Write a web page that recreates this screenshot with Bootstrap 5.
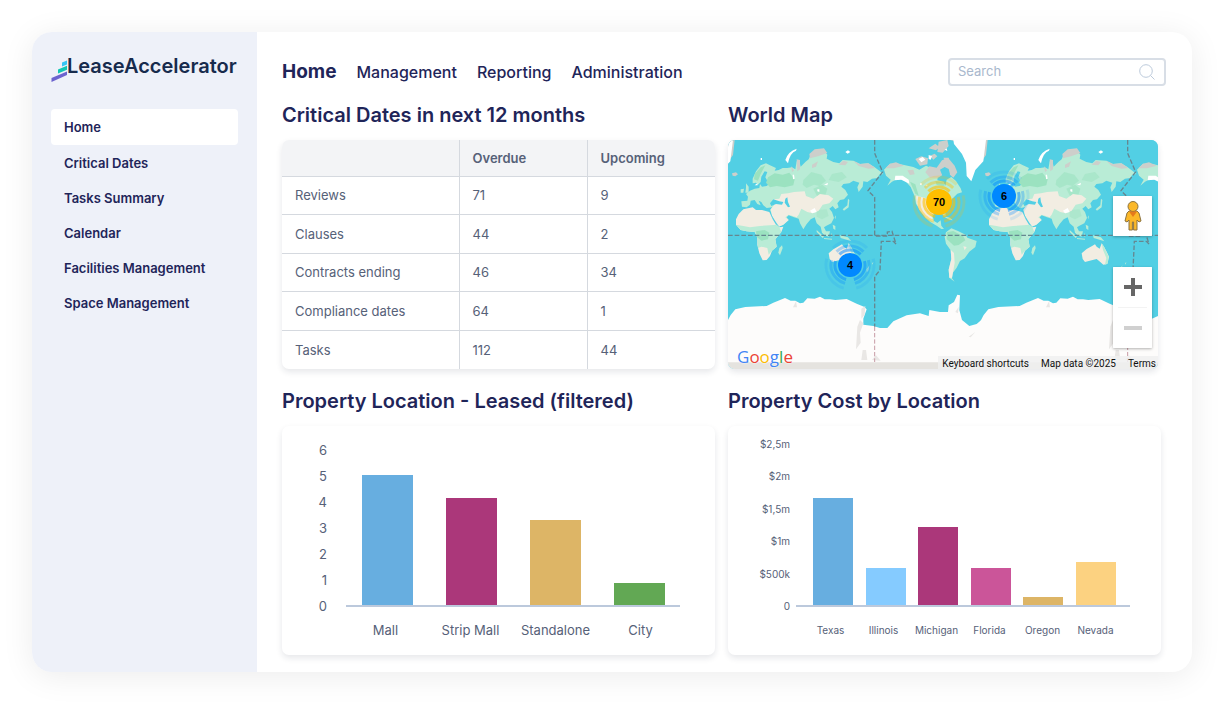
<!DOCTYPE html>
<html lang="en">
<head>
<meta charset="utf-8">
<meta name="viewport" content="width=device-width, initial-scale=1">
<title>LeaseAccelerator</title>
<link rel="stylesheet" href="https://cdn.jsdelivr.net/npm/bootstrap@5.3.0/dist/css/bootstrap.min.css">
<style>
  :root { --navy: #1f2559; --slate: #566178; }
  body { font-family: Inter, "Liberation Sans", sans-serif; color: var(--slate); background: #fff; font-size: 13px; }
  .shell { margin: 32px; border-radius: 20px; background: #fff; box-shadow: 0 4px 32px rgba(0,0,0,.08); overflow: hidden; }
  .side { width: 225px; flex: none; background: #eef1f9; padding: 24px 19px; }
  .brand { height: 28px; color: #172b4d; font: 600 20px/20px Inter, sans-serif; text-decoration: none; margin-bottom: 25px; }
  .side .nav-link { color: var(--navy); font-weight: 600; height: 35px; line-height: 36px; padding: 0 13px; border-radius: 4px; }
  .side .nav-link.active { background: #fff; color: var(--navy); height: 36px; line-height: 36px; }
  .workspace { flex: 1; min-width: 0; padding: 26px 26px 17px 25px; }
  .topnav { gap: 20px; height: 28px; }
  .topnav a { color: var(--navy); text-decoration: none; font-size: 16px; line-height: 28px; font-weight: 500; }
  .topnav a.active { font-size: 19px; font-weight: 700; }
  .searchbox { width: 218px; height: 28px; border: 2px solid #d8dee6; border-radius: 4px; padding: 0 9px 0 8px; }
  .searchbox input { min-width: 0; flex: 1; border: 0; outline: 0; padding: 0; font-size: 13px; background: transparent; color: var(--slate); }
  .searchbox input::placeholder { color: #a9b8cd; opacity: 1; }
  .panels { display: grid; grid-template-columns: 1fr 1fr; column-gap: 13px; padding-right: 5px; }
  .panels h2 { color: var(--navy); font-size: 20px; line-height: 26px; font-weight: 600; margin: 16px 0 12px; }
  .panels .lower h2 { margin: 19px 0 12px; }
  .tile { border-radius: 7px; background: #fff; box-shadow: 0 3px 6px rgba(30,40,60,.11); overflow: hidden; }
  .dates { height: 229px; margin: 0; table-layout: fixed; color: var(--slate); border-collapse: collapse; width: 100%; }
  .dates .num { width: 128px; }
  .dates th, .dates td { height: 38px; padding: 1px 13px 0; font-weight: 400; vertical-align: middle; border-top: 1px solid #d5d9df; border-left: 1px solid #d5d9df; }
  .dates thead th { height: 36px; background: #f3f4f6; font-weight: 600; border-top: 0; }
  .dates tr > :first-child { border-left: 0; }
  .map { position: relative; height: 229px; margin-right: 3px; background: #52cfe4; }
  .map > svg { display: block; width: 100%; height: 229px; }
  .cluster { font: 700 11px Arial, "Liberation Sans", sans-serif; fill: #000; text-anchor: middle; }
  .mapbtn { display: flex; align-items: center; justify-content: center; width: 39px; height: 40px; padding: 0; border: 0; background: #fff; }
  .controls { position: absolute; right: 6px; top: 56px; display: flex; flex-direction: column; gap: 31px; }
  .ctl { background: #fff; box-shadow: 0 1px 3px rgba(0,0,0,.3); border-radius: 1px; overflow: hidden; }
  .ctl hr { margin: 0 5px; border-color: #d0d0d0; }
  .attribution { position: absolute; right: 0; bottom: 0; display: flex; gap: 12px; padding: 0 2px 0 4px; height: 13px; background: rgba(240,240,240,.85); }
  .attribution a, .attribution span { font: 10px/16px Roboto, sans-serif; color: #111; text-decoration: none; white-space: nowrap; }
  .google { position: absolute; left: 9px; bottom: 2px; font: 500 17px/20px "Open Sans", sans-serif; text-shadow: 0 0 1px #fff, 0 0 2px #fff; }
  .chart { min-height: 229px; padding: 15px 35px 16px 0; }
  .area { height: 174px; }
  .yaxis { width: 15px; margin: 0 19px 0 30px; text-align: right; line-height: 18px; }
  .plot { flex: 1; margin-bottom: 8px; padding: 0 15px 0 16px; border-bottom: 2px solid #bcc9dc; }
  .bar { width: 51px; }
  .xaxis { display: flex; margin: 6px -3px 0 61px; line-height: 18px; text-align: center; }
  .xaxis span { flex: 1 1 0; white-space: nowrap; }
  .cost { padding-top: 9px; padding-right: 31px; font-size: 10px; }
  .cost .area { height: 180px; }
  .cost .yaxis { width: 42px; margin-left: 20px; margin-right: 6px; }
  .cost .plot { padding: 0 14px 0 17px; }
  .cost .bar { width: 40px; }
  .cost .xaxis { margin: 6px 8px 0 76px; }
</style>
</head>
<body>
<div class="shell d-flex">
  <aside class="side">
    <a class="brand d-flex" href="#">
      <svg width="16" height="28" viewBox="0 0 16 28" aria-hidden="true">
        <path d="M11 6.500l5-2v4l-5 2z" fill="#35c5f4"/><path d="M7 13.500l9-3.700v4l-9 3.700z" fill="#10c6b4"/><path d="M.5 22L16 15.500v3.500L.5 26z" fill="#6c63cf"/>
      </svg>
      <span>LeaseAccelerator</span>
    </a>
    <nav class="nav flex-column" aria-label="Sections">
      <a class="nav-link active" href="#">Home</a>
      <a class="nav-link" href="#">Critical Dates</a>
      <a class="nav-link" href="#">Tasks Summary</a>
      <a class="nav-link" href="#">Calendar</a>
      <a class="nav-link" href="#">Facilities Management</a>
      <a class="nav-link" href="#">Space Management</a>
    </nav>
  </aside>

  <main class="workspace">
    <header class="d-flex justify-content-between align-items-center">
      <nav class="topnav d-flex align-items-baseline" aria-label="Main">
        <a class="active" href="#">Home</a>
        <a href="#">Management</a>
        <a href="#">Reporting</a>
        <a href="#">Administration</a>
      </nav>
      <form class="searchbox d-flex align-items-center" role="search">
        <input type="search" placeholder="Search" aria-label="Search">
        <svg width="16" height="16" viewBox="0 0 16 16" fill="none" stroke="#bccadb" aria-hidden="true"><circle cx="7" cy="7" r="6.300"/><path d="M11.500 11.500l4 4"/></svg>
      </form>
    </header>

    <div class="panels">
      <section>
        <h2>Critical Dates in next 12 months</h2>
        <div class="tile">
          <table class="dates">
            <colgroup><col><col class="num"><col class="num"></colgroup>
            <thead><tr><th aria-label="Type"></th><th scope="col">Overdue</th><th scope="col">Upcoming</th></tr></thead>
            <tbody>
              <tr><th scope="row">Reviews</th><td>71</td><td>9</td></tr>
              <tr><th scope="row">Clauses</th><td>44</td><td>2</td></tr>
              <tr><th scope="row">Contracts ending</th><td>46</td><td>34</td></tr>
              <tr><th scope="row">Compliance dates</th><td>64</td><td>1</td></tr>
              <tr><th scope="row">Tasks</th><td>112</td><td>44</td></tr>
            </tbody>
          </table>
        </div>
      </section>

      <section>
        <h2>World Map</h2>
        <div class="tile map">
          <svg viewBox="0 0 430 229" preserveAspectRatio="xMidYMid slice" role="img" aria-label="World map with property clusters">
            <defs>
              <g id="world">
                <!-- Eurasia -->
                <path fill="#b9ecd6" d="M66 230L64 214 82 212 84 200 78 192 90 182 104 176 118 174 120 162 126 170 140 168 150 160 152 150 142 152 136 142 142 126 134 124 124 140 122 156 114 164 108 158 98 160 98 146 108 124 122 106 138 100 150 106 168 114 164 122 176 120 188 114 202 114 216 112 226 118 230 94 238 92 242 110 256 96 266 88 272 74 290 62 312 62 322 74 320 86 340 96 358 100 368 90 400 92 420 102 444 100 462 110 478 122 490 132 478 134 472 144 456 146 442 156 430 154 428 170 416 186 412 172 418 158 400 152 388 160 370 162 364 170 376 180 384 194 372 208 360 210 352 220 356 232 346 238 338 228 328 236 336 246 342 264 334 280 318 288 312 292 318 304 316 318 306 308 302 290 290 280 284 262 272 268 260 282 250 298 240 280 236 266 222 262 206 256 200 262 206 270 190 284 172 292 158 258 150 240 158 232 140 234 130 226 124 216 116 212 122 226 112 222 104 210 92 212 90 224 80 232z"/>
                <g fill="#9be2c0"><path d="M144 142l20-12 24 4 20-6 16 20-4 18-26 6-24-4-20 4-12-14z"/><path d="M104 132l18-20 14-6-14 26-8 20-12-4z"/><path d="M250 150l24-24 30 8 14 18-20 16-16-4-22 10-12-10z" opacity=".6"/><path d="M336 132l30-6 14 16-24 14-30-6z" opacity=".5"/><path d="M280 176l26-12 16 12-6 20-24 4z" opacity=".6"/><path d="M290 240l30-2 6 20-20 10-16-8z" opacity=".4"/></g>
                <path fill="#f2ede2" d="M156 258L152 238 162 226 160 208 178 206 184 192 204 190 222 186 254 184 258 198 280 206 300 192 326 196 340 206 328 220 308 224 296 242 278 250 262 246 244 236 236 254 230 262 206 254 196 262 206 270 190 284 172 292z"/>
                <path fill="#cdcfcb" d="M268 72l16-14 28-3 10 14-28 10-24 6zM276 104l18-10-6 16-12 4zM356 104l14-12 14 4-8 10zM400 92l20 10 26-2 20 14-20 2-30-8zM230 88l10 2 0 28-8 6zM214 108l8 14-6 4z"/>
                <path fill="#52cfe4" d="M150 220l10-12 18 6 12 2-4 8-18-2-14 6zM196 206l6-4 2 14 6 14-6 2-10-14zM154 254l16 26 8 10-4 3-12-16z"/>
                <path fill="#fff" d="M196 90q8-26 34-34l-2 6q-18 6-24 38zM376 66l8-5 7 5-8 5zM122 84l4 0 0 6-4 0zM218 134l4 0 2 12-5 2zM292 178l6 0 0 8-6-2zM270 242l14-8 6 12-14 4zM104 166l8-6 1 6zM312 164l12-6-2 8z"/>
                <path fill="#b9ecd6" d="M78 160l8 10 0 18-10 0 2-14zM62 178l10-2-2 12-8 0zM368 238l14-12 2-20 4 4-2 22-14 10zM344 262l4-6-2 12zM338 284l8 4 0 12-6-4zM290 300l22 20-4 4-18-18zM316 304l14 0-4 16-12-4zM334 308l4 10-4 2zM360 316l24 6 10 12-12-4-20-6zM312 324l24 2 0 3-24-2z"/>
                <path fill="#cdcfcb" d="M36 130l12-3 6 6-8 6-8-2z"/>
                <!-- Africa -->
                <path fill="#f2ede2" d="M70 238L98 232 108 240 126 240 148 246 158 268 168 284 178 292 190 290 184 306 166 328 170 350 156 362 150 378 140 390 128 391 118 370 112 345 112 322 104 306 80 304 62 300 48 284 48 268 56 252z"/>
                <path fill="#b9ecd6" d="M48 284L70 288 90 292 120 288 150 286 170 284 178 292 184 306 166 328 170 350 156 362 146 374 142 354 124 350 114 354 112 322 104 306 80 304 62 300z"/>
                <path fill="#9be2c0" d="M108 304l26-4 14 8-4 20-20 4-14-12z"/>
                <path fill="#b9ecd6" d="M178 354l8-8 2 8-8 22-5-8z"/>
                <!-- Australia -->
                <path fill="#f2ede2" d="M326 370L329 387 336 396 356 391 371 387 381 395 391 404 403 402 408 380 401 365 393 350 386 340 380 356 371 350 366 343 356 349 341 357z"/>
                <path fill="#b9ecd6" d="M386 340l7 10 14 30-3 20-8 4 4-20-10-24zM440 418l8-12-2 14-6 8zM456 400l4-4-2 8z"/>
                <!-- Americas and Greenland -->
                <g transform="translate(420 15)">
                  <path fill="#b9ecd6" d="M78 122L72 104 90 86 122 88 160 96 178 104 198 92 216 100 244 104 234 122 232 136 250 140 256 152 260 134 274 126 288 138 302 160 306 172 292 176 276 192 266 204 262 216 252 220 258 242 250 242 244 230 228 232 218 242 222 258 232 264 242 256 244 272 252 282 244 282 230 272 212 262 196 248 180 226 168 206 164 184 152 156 136 138 116 130 96 140 82 152 92 134z"/>
                  <path fill="#f2ede2" d="M168 182l32 8 24 40-10 10 6 20-22-12-20-24-8-20z"/>
                  <path fill="#9be2c0" d="M150 140l16 8 10 34-10-6zM226 138l24 4 4 12-24-4z"/>
                  <path fill="#cdcfcb" d="M76 100l14-14 18-4 24 10-30 8zM196 112l12-18 22 4 16-22 18-8 20 24 8 20-12 16-16-14-10 2-20 12-24 0zM166 72l18-8 20 6-2 18-22 4zM206 40l20-14 12 10-10 10zM236 20l26-5 4 18-18 20-16-2zM210 62l14-6 8 8-12 10zM250 68l16 0 6 16-12 2zM142 106l18-2 4 14-14 2z"/>
                  <path fill="#52cfe4" d="M240 104l14-8 12 6 4 16-10 10-12-4z"/>
                  <path fill="#fff" d="M106 122l22 0 18 12 2 12-24-12-20 2zM176 72l12-6 8 8-12 8zM206 60l10 4-4 10-6-2zM254 44l6-4 2 8zM180 145l6 0 0 4-6 0zM196 152l6-4 0 6z"/>
                  <path fill="#b9ecd6" d="M250 244l20 4 8 8-10-2zM258 292L274 280 294 288 318 300 322 308 350 318 346 336 328 350 314 370 300 378 290 398 278 414 276 430 284 440 268 428 266 404 274 372 272 346 258 326 254 306z"/>
                  <path fill="#9be2c0" d="M260 292l20-4 30 16 6 12-20 14-14 2-22-20z"/>
                  <path fill="#f2ede2" d="M272 344l10 10 2 30-8 44-8 0-2-24 8-32zM310 334l10 2-6 10z"/>
                  <path fill="#cdcfcb" d="M270 15h113l-5 45-14 20-8 2-18-50z"/>
                  <path fill="#fff" d="M280 15h98l-8 64-24 26-12 34-14-16-2-40-12-26-24-30z"/>
                </g>
                <!-- Antarctica -->
                <path fill="#fdfcfb" d="M23 572L32 555 46 538 76 531 140 528 160 518 195 504 212 512 226 512 240 520 250 518 262 505 284 506 300 500 314 508 330 508 346 510 380 507 410 521 432 530 440 538 430 566 430 584 460 588 480 594 502 594 520 574 560 556 600 550 626 558 628 540 660 546 684 546 686 526 702 516 712 494 720 496 718 540 726 570 748 588 770 582 784 570V720H23z"/>
                <path fill="#e9e7e5" d="M219 532l9-18 3 18zM424 536l12-8-2 26-10 12zM412 590l8-20 10 10-10 28 2 30-14 20zM424 690l4-30 10 0 4 30zM456 690l12-14 14 16zM746 620l20-14-14 16zM706 546l10-16-2 20z"/>
                <path fill="none" stroke="#668790" stroke-width="4" stroke-dasharray="14 6" d="M464 30V70L488 126 444 182 464 202V318H502V306L516 304 528 342 520 334H484L480 420 464 440V590"/>
                <path fill="none" stroke="#c79aa4" stroke-width="3" stroke-dasharray="13 6" d="M464 590V696"/>
              </g>
            </defs>
            <rect width="430" height="229" fill="#52cfe4"/>
            <g transform="translate(-8 -10) scale(.33333)">
              <use href="#world" x="-759"/><use href="#world"/><use href="#world" x="759"/>
              <path fill="none" stroke="#668790" stroke-width="4" stroke-dasharray="14 6" d="M24 316H1320"/>
              <path fill="#e5e3df" d="M24 697H1320v30H24z"/>
            </g>
            <g fill="none" stroke-width="3">
              <g stroke="#ffbf00" transform="translate(211 62) rotate(-135)"><circle r="15" pathLength="360" stroke-dasharray="90 30" opacity=".6"/><circle r="20" pathLength="360" stroke-dasharray="90 30" opacity=".4"/><circle r="25" pathLength="360" stroke-dasharray="90 30" opacity=".2"/></g>
              <g stroke="#0088ff" transform="translate(276 56) rotate(-135)"><circle r="15" pathLength="360" stroke-dasharray="90 30" opacity=".5"/><circle r="19" pathLength="360" stroke-dasharray="90 30" opacity=".3"/><circle r="24" pathLength="360" stroke-dasharray="90 30" opacity=".12"/></g>
              <g stroke="#0088ff" transform="translate(122 125) rotate(-135)"><circle r="15" pathLength="360" stroke-dasharray="90 30" opacity=".5"/><circle r="19" pathLength="360" stroke-dasharray="90 30" opacity=".3"/><circle r="24" pathLength="360" stroke-dasharray="90 30" opacity=".12"/></g>
            </g>
            <circle cx="211" cy="62" r="13" fill="#ffbf00"/><circle cx="276" cy="56" r="12" fill="#0088ff"/><circle cx="122" cy="125" r="12" fill="#0088ff"/>
            <g class="cluster"><text x="211" y="66">70</text><text x="276" y="60">6</text><text x="122" y="129">4</text></g>
          </svg>
          <div class="controls">
            <div class="ctl">
              <button class="mapbtn" type="button" aria-label="Street View">
                <svg width="18" height="32" viewBox="0 0 18 32"><path d="M5 11h8l2 2 2 8-2 1-2-2v10H9.600v-8H8.400v8H5V20l-2 2-2-1 2-8z" fill="#fbb829" stroke="#8b7340" stroke-linejoin="round"/><circle cx="9" cy="6.500" r="5" fill="#fbb829" stroke="#8b7340"/><path d="M5 11.500h8L9 17z" fill="#e57a1c"/></svg>
              </button>
            </div>
            <div class="ctl">
              <button class="mapbtn" type="button" aria-label="Zoom in"><svg width="18" height="18" viewBox="0 0 18 18"><path d="M9 0v18M0 9h18" stroke="#666" stroke-width="4"/></svg></button>
              <hr>
              <button class="mapbtn" type="button" aria-label="Zoom out"><svg width="18" height="18" viewBox="0 0 18 18"><path d="M0 9h18" stroke="#d0d0d0" stroke-width="4"/></svg></button>
            </div>
          </div>
          <div class="google" aria-label="Google"><span style="color:#4285f4">G</span><span style="color:#ea4335">o</span><span style="color:#fbbc05">o</span><span style="color:#4285f4">g</span><span style="color:#34a853">l</span><span style="color:#ea4335">e</span></div>
          <div class="attribution"><a href="#">Keyboard shortcuts</a><span>Map data ©2025</span><a href="#">Terms</a></div>
        </div>
      </section>

      <section class="lower">
        <h2>Property Location - Leased (filtered)</h2>
        <div class="tile chart">
          <div class="area d-flex">
            <div class="yaxis d-flex flex-column justify-content-between"><span>6</span><span>5</span><span>4</span><span>3</span><span>2</span><span>1</span><span>0</span></div>
            <div class="plot d-flex justify-content-between align-items-end">
              <div class="bar" style="height:130px;background:#67aee0"></div>
              <div class="bar" style="height:107px;background:#ab377a"></div>
              <div class="bar" style="height:85px;background:#ddb566"></div>
              <div class="bar" style="height:22px;background:#62a854"></div>
            </div>
          </div>
          <div class="xaxis"><span>Mall</span><span>Strip Mall</span><span>Standalone</span><span>City</span></div>
        </div>
      </section>

      <section class="lower">
        <h2>Property Cost by Location</h2>
        <div class="tile chart cost">
          <div class="area d-flex">
            <div class="yaxis d-flex flex-column justify-content-between"><span>$2,5m</span><span>$2m</span><span>$1,5m</span><span>$1m</span><span>$500k</span><span>0</span></div>
            <div class="plot d-flex justify-content-between align-items-end">
              <div class="bar" style="height:107px;background:#67aee0"></div>
              <div class="bar" style="height:37px;background:#85cbff"></div>
              <div class="bar" style="height:78px;background:#ab377a"></div>
              <div class="bar" style="height:37px;background:#cb5599"></div>
              <div class="bar" style="height:8px;background:#ddb566"></div>
              <div class="bar" style="height:43px;background:#fcd281"></div>
            </div>
          </div>
          <div class="xaxis"><span>Texas</span><span>Illinois</span><span>Michigan</span><span>Florida</span><span>Oregon</span><span>Nevada</span></div>
        </div>
      </section>
    </div>
  </main>
</div>
<script src="https://cdn.jsdelivr.net/npm/bootstrap@5.3.0/dist/js/bootstrap.bundle.min.js"></script>
</body>
</html>
